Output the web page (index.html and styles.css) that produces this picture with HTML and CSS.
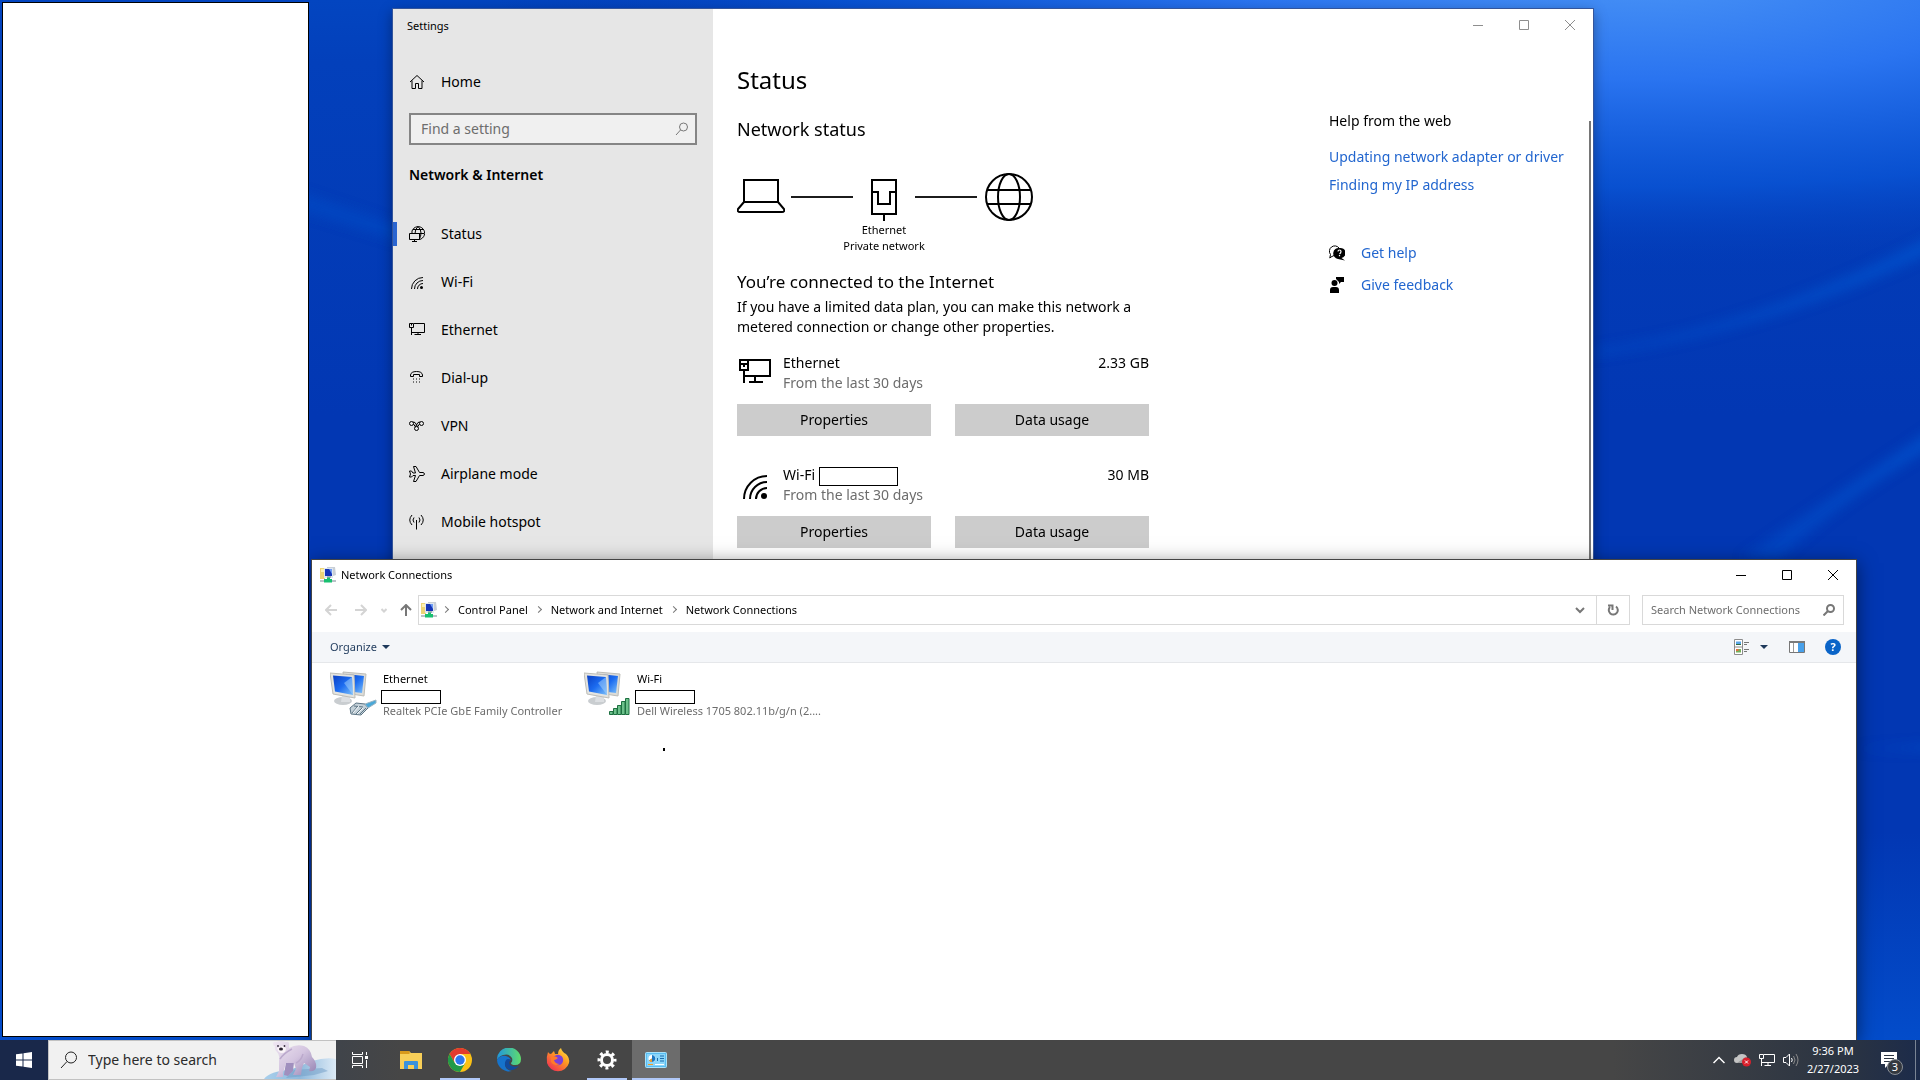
FILE: index.html
```html
<!DOCTYPE html>
<html lang="en">
<head>
  <meta charset="UTF-8">
  <meta name="viewport" content="width=device-width, initial-scale=1.0">
  <title>Desktop</title>
  <link rel="stylesheet" href="styles.css">
</head>
<body>
  <div class="desktop">
    <svg class="wallpaper" viewBox="0 0 1920 1080" preserveAspectRatio="none" aria-hidden="true">
      <defs>
        <linearGradient id="base" x1="0" y1="0" x2="0" y2="1">
          <stop offset="0" stop-color="#0345c0"/>
          <stop offset=".06" stop-color="#0340bb"/>
          <stop offset=".4" stop-color="#0237b3"/>
          <stop offset=".8" stop-color="#0237b3"/>
          <stop offset="1" stop-color="#034cca"/>
        </linearGradient>
        <radialGradient id="glow" gradientUnits="userSpaceOnUse" cx="0" cy="0" r="1" gradientTransform="translate(1640 -30) scale(1150 320)">
          <stop offset="0" stop-color="#4a94f6"/>
          <stop offset=".35" stop-color="#2a74f0"/>
          <stop offset=".7" stop-color="#0a55d6" stop-opacity=".8"/>
          <stop offset="1" stop-color="#0237b3" stop-opacity="0"/>
        </radialGradient>
        <linearGradient id="ray" x1="0" y1="0" x2="1" y2="0">
          <stop offset="0" stop-color="#0a5ad6" stop-opacity=".3"/>
          <stop offset="1" stop-color="#0a5ad6" stop-opacity=".6"/>
        </linearGradient>
        <filter id="soft"><feGaussianBlur stdDeviation="6"/></filter>
      </defs>
      <rect width="1920" height="1080" fill="url(#base)"/>
      <rect width="1920" height="1080" fill="url(#glow)"/>
      <g filter="url(#soft)">
        <path d="M1594 362Q1760 340 1940 240V258Q1770 345 1594 370Z" fill="url(#ray)"/>
        <path d="M1740 580Q1840 510 1940 440V460Q1840 520 1780 580Z" fill="url(#ray)"/>
        <path d="M1850 778L1940 773V779Z" fill="url(#ray)"/>
        <path d="M300 200L400 235V250L300 218Z" fill="#0a4cc6" opacity=".6"/>
      </g>
    </svg>

    <div class="blank-panel"></div>

    <!-- Settings window -->
    <section class="window settings">
      <nav class="sidebar">
        <div class="settings-title">Settings</div>
        <a class="nav-item home" href="#">
          <svg width="16" height="16" viewBox="0 0 16 16"><path d="M1 8 8 1.500 15 8M3 6.500V14.500H6.500V9.500H9.500V14.500H13V6.500"/></svg>
          Home
        </a>
        <div class="find">
          <input type="text" id="find" aria-label="Find a setting" placeholder="Find a setting">
          <svg width="14" height="14" viewBox="0 0 14 14"><circle cx="8.500" cy="5" r="4"/><path d="M5.500 8 1 13"/></svg>
        </div>
        <h2 class="nav-heading">Network &amp; Internet</h2>
        <a class="nav-item current" href="#">
          <svg width="16" height="16" viewBox="0 0 16 16"><path d="M3 7.500V5A6.500 6.500 0 1 1 10.500 13.500M4 3.500H14M9 .500Q6 3 6 7.500M9 .500Q12 3 12 7Q12 11 10 13.500M6 7.500H15M.500 7.500H10.500V13.500H.500ZM5.500 13.500V15.500M3 15.500H8"/></svg>
          Status
        </a>
        <a class="nav-item" href="#">
          <svg width="16" height="16" viewBox="0 0 16 16"><path d="M2.500 15A11.500 11.500 0 0 1 14 3.500M5.500 15A8.500 8.500 0 0 1 14 6.500M8.500 15A5.500 5.500 0 0 1 14 9.500"/><circle cx="12.500" cy="13.500" r="1.500" class="solid"/></svg>
          Wi-Fi
        </a>
        <a class="nav-item" href="#">
          <svg width="16" height="16" viewBox="0 0 16 16"><path d="M5 1.500H15.500V10.500H3M.500 1.500H4.500V5.500H.500ZM2.500 5.500V13M9 10.500V12.500M5.500 12.500H12M2.500 1.500V3.500"/></svg>
          Ethernet
        </a>
        <a class="nav-item" href="#">
          <svg width="16" height="16" viewBox="0 0 16 16"><path d="M1.500 6.500V5Q2 1.500 7.500 1.500T13.500 5V6.500H10.500V4.500H4.500V6.500Z"/><path d="M4 9h1m2 0h1m2 0h1M4 12h1m2 0h1m2 0h1"/></svg>
          Dial-up
        </a>
        <a class="nav-item" href="#">
          <svg width="16" height="16" viewBox="0 0 16 16"><circle cx="2.500" cy="5.500" r="2"/><circle cx="12.500" cy="5.500" r="2"/><circle cx="7.500" cy="10.500" r="2"/><path d="M4 4 6 4.500 8.500 8.500M11 4 9 4.500 6.500 8.500M4.500 6 6.500 9M10.500 6 8.500 9"/></svg>
          VPN
        </a>
        <a class="nav-item" href="#">
          <svg width="16" height="16" viewBox="0 0 16 16"><path d="M.500 5H2.500L4 7H6.500L4.500 .500H7L10.500 6.500H14Q15.500 7 15.500 8T14 9.500H10.500L7 15.500H4.500L6.500 9.500H4L2.500 11H.500L1.500 8Z"/></svg>
          Airplane mode
        </a>
        <a class="nav-item" href="#">
          <svg width="16" height="16" viewBox="0 0 16 16"><path d="M7.500 6V15.500M3 1Q-1.500 6 3 11M12 1Q16.500 6 12 11M5 3.500Q3 6 5 8.500M10 3.500Q12 6 10 8.500"/></svg>
          Mobile hotspot
        </a>
      </nav>

      <div class="settings-body">
        <div class="window-controls inactive">
          <button type="button" aria-label="Minimize"><svg width="10" height="10" viewBox="0 0 10 10"><path d="M0 5.500H10"/></svg></button>
          <button type="button" aria-label="Maximize"><svg width="10" height="10" viewBox="0 0 10 10"><path d="M.500 .500H9.500V9.500H.500Z"/></svg></button>
          <button type="button" aria-label="Close"><svg width="10" height="10" viewBox="0 0 10 10"><path d="M0 0 10 10M10 0 0 10"/></svg></button>
        </div>
        <div class="columns">
          <main class="status">
            <h1>Status</h1>
            <h2>Network status</h2>
            <div class="diagram">
              <svg width="48" height="48" viewBox="0 0 48 48"><path d="M7 7H41V29H7ZM7 29 1 36Q0 39 3 39H45Q48 39 47 36L41 29"/></svg>
              <span class="link-line"></span>
              <svg class="port" width="26" height="48" viewBox="0 0 26 48"><path d="M1 7H25V41H1ZM1 19H7V31H19V19H25M13 41V48"/></svg>
              <span class="link-line"></span>
              <svg width="48" height="48" viewBox="0 0 48 48"><circle cx="24" cy="24" r="23"/><ellipse cx="24" cy="24" rx="11" ry="23"/><path d="M2 17H46M2 31H46"/></svg>
              <p class="diagram-label">Ethernet<br>Private network</p>
            </div>
            <h3>You’re connected to the Internet</h3>
            <p class="plan">If you have a limited data plan, you can make this network a metered connection or change other properties.</p>

            <div class="adapter">
              <svg width="36" height="36" viewBox="0 0 36 36"><path d="M11 7H33V23H8M3 7H11V17H3ZM7 17V30M18 23V29M12 29H26M3 11H11M7 11V14"/></svg>
              <div class="adapter-text">
                <div>Ethernet</div>
                <div class="muted">From the last 30 days</div>
              </div>
              <div>2.33 GB</div>
            </div>
            <div class="adapter-buttons">
              <button type="button">Properties</button>
              <button type="button">Data usage</button>
            </div>

            <div class="adapter">
              <svg class="wifi" width="36" height="36" viewBox="0 0 36 36"><path d="M7 34A23 23 0 0 1 30 11M13 34A17 17 0 0 1 30 17M19 34A11 11 0 0 1 30 23"/><circle cx="27" cy="31" r="3" class="solid"/></svg>
              <div class="adapter-text">
                <div class="ssid">Wi-Fi <span class="blank-box"></span></div>
                <div class="muted">From the last 30 days</div>
              </div>
              <div>30 MB</div>
            </div>
            <div class="adapter-buttons">
              <button type="button">Properties</button>
              <button type="button">Data usage</button>
            </div>
          </main>

          <aside class="help">
            <p>Help from the web</p>
            <a href="#">Updating network adapter or driver</a>
            <a href="#">Finding my IP address</a>
            <div class="support">
              <svg width="16" height="16" viewBox="0 0 16 16"><path d="M5 10.500 2 12 .800 13 1.500 9.500A5 5 0 1 1 10 3" fill="none" stroke="#000"/><path d="M10.500 3A5 5 0 1 1 12.500 13L16 15.500 9 14A5.500 5.500 0 0 1 10.500 3Z"/><path d="M9 6.500Q9 5 10.500 5T12 6.500 10.500 9M10.500 10V11.200" fill="none" stroke="#fff" stroke-width="1.200"/></svg>
              <a href="#">Get help</a>
            </div>
            <div class="support">
              <svg width="16" height="16" viewBox="0 0 16 16"><circle cx="5.500" cy="6" r="3"/><path d="M1 16V13Q1 10 4 10H7Q10 10 10 13V16ZM7 0H15V5H12L10 7V5L7 2Z"/></svg>
              <a href="#">Give feedback</a>
            </div>
          </aside>
        </div>
        <div class="scroll-thumb"></div>
      </div>
    </section>

    <!-- Network Connections window -->
    <section class="window connections">
      <header class="titlebar">
        <svg width="16" height="16" viewBox="0 0 16 16"><use href="#net-icon"/></svg>
        <span class="titlebar-text">Network Connections</span>
        <div class="window-controls">
          <button type="button" aria-label="Minimize"><svg width="10" height="10" viewBox="0 0 10 10"><path d="M0 5.500H10"/></svg></button>
          <button type="button" aria-label="Maximize"><svg width="10" height="10" viewBox="0 0 10 10"><path d="M.500 .500H9.500V9.500H.500Z"/></svg></button>
          <button type="button" aria-label="Close"><svg width="10" height="10" viewBox="0 0 10 10"><path d="M0 0 10 10M10 0 0 10"/></svg></button>
        </div>
      </header>
      <div class="address-row">
        <div class="history">
          <button type="button" aria-label="Back" disabled><svg width="12" height="12" viewBox="0 0 12 12"><path d="M12 6H1M6 1 1 6 6 11"/></svg></button>
          <button type="button" aria-label="Forward" disabled><svg width="12" height="12" viewBox="0 0 12 12"><path d="M0 6H11M6 1 11 6 6 11"/></svg></button>
          <button type="button" class="recent" aria-label="Recent locations" disabled><svg width="6" height="12" viewBox="0 0 6 12"><path d="M.500 5 3 7.500 5.500 5"/></svg></button>
          <button type="button" class="up" aria-label="Up"><svg width="12" height="12" viewBox="0 0 12 12"><path d="M6 12V1M1 6 6 1 11 6"/></svg></button>
        </div>
        <div class="address">
          <svg width="16" height="16" viewBox="0 0 16 16"><use href="#net-icon"/></svg>
          <span class="crumb-sep"></span>
          <a href="#">Control Panel</a>
          <span class="crumb-sep"></span>
          <a href="#">Network and Internet</a>
          <span class="crumb-sep"></span>
          <a href="#">Network Connections</a>
          <button type="button" class="address-drop" aria-label="Previous locations"><svg width="10" height="10" viewBox="0 0 10 10"><path d="M1 3 5 7 9 3"/></svg></button>
          <button type="button" class="refresh" aria-label="Refresh"><svg width="12" height="12" viewBox="0 0 12 12"><path d="M9 2.500A4.500 4.500 0 1 1 3 3M1 1.500H5.500V6"/></svg></button>
        </div>
        <div class="conn-search">
          <input type="text" aria-label="Search Network Connections" placeholder="Search Network Connections">
          <svg width="12" height="12" viewBox="0 0 12 12"><circle cx="7.500" cy="4.500" r="3.500"/><path d="M5 7 .500 11.500"/></svg>
        </div>
      </div>
      <div class="toolbar">
        <button type="button" class="organize">Organize <span class="caret"></span></button>
        <button type="button" class="view" aria-label="Change your view">
          <svg width="16" height="16" viewBox="0 0 16 16"><path d="M.500 .500H8.500V15.500H.500ZM.500 8H8.500" fill="#fff" stroke="#8c8c8c"/><path d="M2 2.500H7V6H2Z" fill="#5aa6e8"/><path d="M2 5H7V6H2Z" fill="#2d6a3e"/><path d="M2 10H7V13.500H2Z" fill="#73b05a"/><path d="M2 10H4.500V12H2Z" fill="#e07040"/><path d="M10 3.500H15M10 5.500H13M10 10.500H15M10 12.500H13" stroke="#777"/></svg>
          <span class="caret"></span>
        </button>
        <button type="button" aria-label="Show the preview pane"><svg width="16" height="12" viewBox="0 0 16 12"><path d="M.500 .500H15.500V11.500H.500Z" fill="#fff" stroke="#777"/><path d="M0 0H16V2H0Z" fill="#7a7a7a"/><path d="M4.500 2V11" stroke="#999"/><path d="M9 2H15V11H9Z" fill="#48a0ea"/></svg></button>
        <button type="button" class="help-button" aria-label="Get help">?</button>
      </div>
      <div class="files">
        <div class="file">
          <svg class="file-icon" width="48" height="46" viewBox="0 0 48 46">
            <use href="#monitors"/>
            <path d="M20 37 26 32 35 33 38 37 31 44 21 43Z" fill="#c3d0d8" stroke="#5c7484"/><path d="M22 42 28 35M26 43 32 37M30 43 36 37M24 35 33 36" fill="none" stroke="#5c7484"/><path d="M23 42 29 35M27 43 33 37" stroke="#f4f8fa"/><path d="M35 33 46 29V32L38 37Z" fill="#4aa8d8" stroke="#9ab4c2"/>
          </svg>
          <div class="file-text">
            <div>Ethernet</div>
            <div class="blank-box"></div>
            <div class="muted">Realtek PCIe GbE Family Controller</div>
          </div>
        </div>
        <div class="file">
          <svg class="file-icon" width="48" height="46" viewBox="0 0 48 46">
            <use href="#monitors"/>
            <path d="M25.500 40.500H29V43.500H25.500ZM29.500 37.500H33V43.500H29.500ZM33.500 34.500H37V43.500H33.500ZM37.500 30.500H41V43.500H37.500ZM41.500 27.500H45V43.500H41.500Z" fill="#6cc08a" stroke="#1d7040"/>
          </svg>
          <div class="file-text">
            <div>Wi-Fi</div>
            <div class="blank-box"></div>
            <div class="muted">Dell Wireless 1705 802.11b/g/n (2....</div>
          </div>
        </div>
      </div>
      <div class="speck"></div>
    </section>
  </div>

  <footer class="taskbar">
    <button type="button" class="start" aria-label="Start"><svg width="16" height="16" viewBox="0 0 16 16"><path d="M0 2.300 6.500 1.400V7.500H0ZM7.500 1.200 16 0V7.500H7.500ZM0 8.500H6.500V14.600L0 13.700ZM7.500 8.500H16V16L7.500 14.800Z" fill="#fff"/></svg></button>
    <div class="task-search">
      <svg width="18" height="18" viewBox="0 0 18 18"><circle cx="11" cy="6.500" r="5.500"/><path d="M7 10.500 1 17"/></svg>
      <input type="text" aria-label="Type here to search" placeholder="Type here to search">
      <svg class="bear" width="72" height="38" viewBox="0 0 72 38" aria-hidden="true">
        <defs>
          <linearGradient id="fur" x1="0" y1="0" x2="1" y2="1"><stop offset="0" stop-color="#f0e8f2"/><stop offset=".5" stop-color="#d4c5e0"/><stop offset="1" stop-color="#8e7cae"/></linearGradient>
          <linearGradient id="ice" x1="0" y1="0" x2="1" y2="0"><stop offset="0" stop-color="#a8cfec"/><stop offset=".5" stop-color="#8fb9dc"/><stop offset="1" stop-color="#dceaf6"/></linearGradient>
        </defs>
        <path d="M0 38Q6 30 26 29L48 20Q62 16 72 18V38Z" fill="url(#ice)"/>
        <path d="M22 37 30 29 58 27 64 30 50 34Z" fill="#6f9cc6" opacity=".5"/>
        <path d="M22 21 30 21 29 30 24 35 20 34Z" fill="#a08fbe"/>
        <path d="M9 3Q9 0 12 1Q17 -1 22 1Q25 0 25 3L25 7Q32 3 40 5Q47 8 48 16Q53 21 52 27 50 31 45 30L46 26 40 22 38 27 37 34H29L32 28 30 22 22 22 19 32 19 36H12L15 30 15 18Q16 14 13 11Q10 8 11 5Q9 5 9 3Z" fill="url(#fur)"/>
        <path d="M16 18Q20 12 28 8M32 22Q37 20 39 13" fill="none" stroke="#bba9cc" stroke-width="1.500"/>
        <path d="M13 7Q14 12 18 12T22 7L18 5Z" fill="#faf4f8"/>
        <circle cx="14" cy="5" r=".9" fill="#3a3040"/><circle cx="20.500" cy="5" r=".9" fill="#3a3040"/><ellipse cx="17" cy="8" rx="2" ry="1.500" fill="#2e2634"/>
      </svg>
    </div>
    <div class="apps">
      <button type="button" class="task-view" aria-label="Task View"><svg width="16" height="16" viewBox="0 0 16 16"><path d="M.500 0V2.500H10.500V0M.500 4.500H10.500V11.500H.500ZM.500 16V13.500H10.500V16M14.500 0V3M14.500 8V16" fill="none" stroke="#fff"/><path d="M13 4H16V7H13Z" fill="#fff"/></svg></button>
      <button type="button" aria-label="File Explorer"><svg width="22" height="20" viewBox="0 0 22 20"><path d="M0 1H9L11 3H22V19H0Z" fill="#f8cf58"/><path d="M0 1H9L10 3 9 4H0Z" fill="#d99a1b"/><path d="M4 19V12Q4 11 5 11H17Q18 11 18 12V19H14V15H8V19Z" fill="#3b92dc"/></svg></button>
      <button type="button" class="running" aria-label="Google Chrome"><svg width="24" height="24" viewBox="0 0 24 24"><circle cx="12" cy="12" r="12" fill="#fbc116"/><path d="M1.600 6A12 12 0 0 1 22.400 6L12 6 6.800 15Z" fill="#e33b2e"/><path d="M1.600 6A12 12 0 0 0 12 24L17.200 15 6.800 15Z" fill="#229a48"/><circle cx="12" cy="12" r="6" fill="#fff"/><circle cx="12" cy="12" r="4.700" fill="#2e77ee"/></svg></button>
      <button type="button" aria-label="Microsoft Edge"><svg width="24" height="24" viewBox="0 0 24 24"><defs><linearGradient id="edge" x1="0" y1="0" x2="1" y2="0"><stop offset="0" stop-color="#2097dd"/><stop offset="1" stop-color="#5fdc6c"/></linearGradient></defs><path d="M0 12A12 12 0 0 1 24 11Q24 17 18 17 14 17 14 15 16 13 15 10 12 5 6 7 1 9 0 12Z" fill="url(#edge)"/><path d="M0 12Q3 7 9 8 13 9 14 12 9 11 8 16 8 22 15 23A12 12 0 0 1 0 12Z" fill="#1673cb"/><path d="M9 12Q6 18 11 21 16 24 22 18 17 20 13 17 11 14 14 12 11 10 9 12Z" fill="#114a9c"/></svg></button>
      <button type="button" aria-label="Firefox"><svg width="24" height="24" viewBox="0 0 24 24"><defs><linearGradient id="fox" x1="1" y1="0" x2=".2" y2="1"><stop offset="0" stop-color="#fff04a"/><stop offset=".45" stop-color="#ff9a22"/><stop offset="1" stop-color="#f02c55"/></linearGradient></defs><path d="M2 4Q3 6 5 6L8 3 9 6 12 6Q12 2 15 0 16 4 20 6 24 10 23 15A11.500 11.500 0 0 1 1 15Q0 9 2 4Z" fill="url(#fox)"/><circle cx="12" cy="12" r="5.200" fill="#7a40d8"/><path d="M5 9Q9 7 12 10 10 12 8 12 9 16 14 16 8 19 5 14Z" fill="#ff7a2a"/></svg></button>
      <button type="button" class="running" aria-label="Settings"><svg width="20" height="20" viewBox="0 0 20 20"><circle cx="10" cy="10" r="5.500" fill="none" stroke="#fff" stroke-width="3"/><circle cx="10" cy="10" r="8" fill="none" stroke="#fff" stroke-width="3" stroke-dasharray="3 3.283" stroke-dashoffset="1.500"/></svg></button>
      <button type="button" class="running active" aria-label="Control Panel"><svg width="22" height="16" viewBox="0 0 22 16"><rect x=".5" y=".5" width="21" height="15" rx="1" fill="#59bdf2" stroke="#a8e2fb"/><path d="M2 2H20V14H2Z" fill="#8bd6fa"/><circle cx="7" cy="6.500" r="3.500" fill="#fff"/><path d="M7 6.500V3A3.500 3.500 0 1 1 4 8.500Z" fill="#1b78c4"/><path d="M7 6.500 4 8.500A3.500 3.500 0 0 0 7 10Z" fill="#f29b28"/><path d="M15 4H19M15 6.500H19M15 9H19M12.500 6V9" stroke="#1b6cae"/><path d="M3 12.500H8" stroke="#f29b28"/><path d="M10 12.500H19" stroke="#fff"/></svg></button>
    </div>
    <div class="tray">
      <button type="button" aria-label="Show hidden icons"><svg width="12" height="8" viewBox="0 0 12 8"><path d="M.500 7 6 1.500 11.500 7" stroke-width="1.500"/></svg></button>
      <button type="button" aria-label="OneDrive"><svg width="18" height="14" viewBox="0 0 18 14"><path d="M3 10Q0 10 0 7T3 4Q4 1 8 1T13 4V10Z" fill="#c4c4c4" stroke="none"/><path d="M3 10 13 3V10Z" fill="#9a9a9a" stroke="none"/><circle cx="12.500" cy="9" r="4.500" fill="#d9202c" stroke="none"/><path d="M11 7.500 14 10.500M14 7.500 11 10.500"/></svg></button>
      <button type="button" aria-label="Network"><svg width="16" height="14" viewBox="0 0 16 14"><path d="M5 1.500H15.500V9.500H3M.500 1.500H4.500V5.500H.500ZM2.500 5.500V13M9 9.500V12.500M5.500 12.500H12"/></svg></button>
      <button type="button" aria-label="Speakers"><svg width="16" height="14" viewBox="0 0 16 14"><path d="M.500 4.500H3L6.500 1V13L3 9.500H.500ZM8.500 5Q10 7 8.500 9"/><path d="M10.500 3Q13.500 7 10.500 11M13 1Q17 7 13 13" stroke="#8a8a8a"/></svg></button>
      <time class="clock">9:36 PM<br>2/27/2023</time>
      <button type="button" class="notifications" aria-label="Notifications"><svg width="16" height="16" viewBox="0 0 16 16"><path d="M0 0H16V12H8L4 16V12H0Z" fill="#fff" stroke="none"/><path d="M3 3.500H13M3 6.500H13M3 9.500H10" stroke="#2c3543"/></svg><span class="badge">3</span></button>
      <button type="button" class="show-desktop" aria-label="Show desktop"></button>
    </div>
  </footer>

  <!-- shared icons -->
  <svg class="sprites" aria-hidden="true">
    <defs>
      <linearGradient id="screen" x1="0" y1="0" x2="1" y2="1"><stop offset="0" stop-color="#0a3fc4"/><stop offset=".5" stop-color="#1c6cf0"/><stop offset="1" stop-color="#7cc0fa"/></linearGradient>
      <symbol id="net-icon" viewBox="0 0 16 16"><path d="M0 1H5V12H0Z" fill="#ecd476"/><path d="M1 2H4V5H1Z" fill="#fbf0b4"/><path d="M7 0H15L16 8 13 9H7Z" fill="#c9cfd6"/><path d="M4 1H13V11H4Z" fill="#dfe6ee"/><path d="M5 2H12V9H5Z" fill="#1535b8"/><path d="M9 2H12V7Z" fill="#6f9cf4"/><path d="M7 9H11V11H7Z" fill="#aab2ba"/><path d="M0 13H16V15H0Z" fill="#b9c2c8"/><path d="M7 10.500H10V12H12V15.500H4V12H7Z" fill="#18c070"/></symbol>
      <symbol id="monitors" viewBox="0 0 48 46"><ellipse cx="13" cy="30" rx="9" ry="4" fill="#c9cdd0"/><path d="M12 24 20 26V31H11Z" fill="#dcdfe2"/><path d="M13 1 36 3 34 25 15 22Z" fill="#dcdcd8" stroke="#bdbdb8"/><path d="M16 3 34 5 32 22 16 20Z" fill="url(#screen)"/><path d="M0 2 24 4 25 27 3 23Z" fill="#e4e4e0" stroke="#bdbdb8"/><path d="M3 4.500 22 6 23 24 5 20.500Z" fill="url(#screen)"/><path d="M22 6 23 24 14 12Z" fill="#a8d4fc" opacity=".5"/></symbol>
    </defs>
  </svg>
</body>
</html>
```
FILE: styles.css
```css
*{
  box-sizing: border-box;
}
body{
  margin: 0;
  height: 100vh;
  display: flex;
  flex-direction: column;
  overflow: hidden;
  font: 14px/20px "Noto Sans", "Open Sans", sans-serif;
  color: #000;
}
h1, h2, h3, p{
  margin: 0;
  font-weight: 400;
}
a{
  color: inherit;
  text-decoration: none;
}
button, input{
  font: inherit;
  color: inherit;
  padding: 0;
  border: 0;
  background: none;
  border-radius: 0;
}
button{
  display: flex;
  align-items: center;
  justify-content: center;
}
input{
  outline: none;
  min-width: 0;
}
input::placeholder{
  color: #6d6d6d;
  opacity: 1;
}
svg{
  display: block;
  flex: none;
}
.sprites{
  position: absolute;
  width: 0;
  height: 0;
}
.muted{
  color: #6d6d6d;
}
.solid{
  fill: #000;
  stroke: none;
}

/* desktop */
.desktop{
  position: relative;
  flex: 1;
  min-height: 0;
  overflow: hidden;
  background: #0237b3;
}
.wallpaper{
  width: 100%;
  height: 100%;
}
.blank-panel{
  position: absolute;
  z-index: 1;
  top: 2px;
  left: 2px;
  bottom: 3px;
  width: 307px;
  background: #fff;
  border: 1px solid #000;
}
.blank-box{
  background: #fff;
  border: 1px solid #000;
}
.window{
  position: absolute;
  background: #fff;
}
.window-controls{
  display: flex;
  justify-content: flex-end;
}
.window-controls button{
  width: 46px;
  height: 32px;
}
.window-controls svg{
  fill: none;
  stroke: #000;
}
.window-controls.inactive svg{
  stroke: #8e8e8e;
}

/* settings */
.settings{
  top: 8px;
  left: 392px;
  right: 326px;
  bottom: 200px;
  display: flex;
  border: 1px solid #34559b;
  box-shadow: 0 4px 12px rgba(0, 0, 0, .35);
}
.sidebar{
  width: 320px;
  background: #e6e6e6;
}
.settings-title{
  padding-left: 14px;
  height: 32px;
  line-height: 34px;
  font-size: 11px;
}
.nav-item{
  position: relative;
  display: flex;
  align-items: center;
  gap: 16px;
  height: 48px;
  padding-left: 16px;
}
.nav-item svg, .find svg{
  fill: none;
  stroke: #000;
}
.home{
  margin-top: 17px;
}
.current::before{
  content: "";
  position: absolute;
  left: 0;
  top: 12px;
  width: 4px;
  height: 24px;
  background: #2a65d0;
}
.find{
  display: flex;
  align-items: center;
  height: 32px;
  margin: 7px 16px 0;
  padding: 0 6px 0 10px;
  border: 2px solid #858585;
  background: #f0f0f0;
}
.find input{
  flex: 1;
}
.find svg{
  stroke: #777;
}
.nav-heading{
  margin: 20px 16px 25px;
  font-size: 14px;
  font-weight: 600;
}
.settings-body{
  position: relative;
  flex: 1;
}
.scroll-thumb{
  position: absolute;
  top: 112px;
  right: 2px;
  bottom: 0;
  width: 2px;
  background: #767676;
}
.columns{
  display: flex;
  justify-content: space-between;
  padding: 19px 22px 0 24px;
}
.status{
  width: 412px;
}
.status h1{
  font-size: 24px;
  line-height: 40px;
}
.status h2{
  margin-top: 17px;
  font-size: 18px;
  line-height: 24px;
}
.diagram{
  display: grid;
  grid-template-columns: 54px 62px 62px 70px 48px;
  align-items: center;
  margin: 32px 0 16px;
}
.diagram svg{
  fill: none;
  stroke: #000;
  stroke-width: 2;
}
.port{
  justify-self: center;
}
.link-line{
  width: 62px;
  height: 2px;
  background: #1c1c1c;
}
.diagram-label{
  grid-column: 2 / 5;
  width: 186px;
  padding-top: 1px;
  font-size: 11px;
  line-height: 16px;
  text-align: center;
}
.status h3{
  font-size: 17px;
  line-height: 24px;
}
.plan{
  margin-top: 3px;
}
.adapter{
  display: flex;
  margin-top: 16px;
}
.adapter svg{
  fill: none;
  stroke: #000;
  stroke-width: 2;
}
.adapter-text{
  flex: 1;
  padding-left: 10px;
}
.ssid{
  display: flex;
  gap: 4px;
  height: 20px;
}
.ssid .blank-box{
  width: 79px;
  height: 19px;
  margin-top: 2px;
}
.adapter-buttons{
  display: grid;
  grid-template-columns: 1fr 1fr;
  gap: 24px;
  margin-top: 11px;
  margin-bottom: 29px;
}
.adapter-buttons button{
  height: 32px;
  background: #ccc;
}
.help{
  width: 242px;
  padding-top: 51px;
}
.help > a{
  display: block;
  margin-top: 8px;
  color: #2266cf;
}
.help p{
  margin-bottom: 16px;
}
.support{
  display: flex;
  align-items: center;
  gap: 16px;
  margin-top: 12px;
  color: #2266cf;
}
.help > a + .support{
  margin-top: 48px;
}

/* network connections */
.connections{
  top: 559px;
  left: 311px;
  right: 63px;
  bottom: 0;
  border: 1px solid #444;
  border-width: 1px 1px 0;
  font-size: 11px;
  box-shadow: 0 4px 18px rgba(0, 0, 0, .5);
}
.titlebar{
  display: flex;
  align-items: center;
  height: 29px;
  padding-left: 8px;
}
.titlebar-text{
  flex: 1;
  margin-left: 5px;
}
.titlebar .window-controls button{
  height: 29px;
}
.address-row{
  display: flex;
  align-items: center;
  height: 41px;
  margin-bottom: 2px;
  padding: 0 12px 0 13px;
}
.history{
  display: flex;
  gap: 18px;
  margin-right: 6px;
}
.history svg{
  fill: none;
  stroke: #777;
  stroke-width: 2;
}
.history :disabled svg{
  stroke: #d4d4d4;
}
.history .recent{
  margin: 0 -4px;
}
.history .up{
  margin-left: -1px;
}
.address{
  flex: 1;
  display: flex;
  align-items: center;
  height: 30px;
  padding-left: 2px;
  border: 1px solid #d9d9d9;
}
.crumb-sep{
  width: 5px;
  height: 5px;
  margin: 0 10px 0 6px;
  border: solid #777;
  border-width: 1px 1px 0 0;
  transform: rotate(45deg);
}
.address a + .crumb-sep{
  margin-left: 8px;
}
.address button svg, .conn-search svg{
  fill: none;
  stroke: #777;
  stroke-width: 2;
}
.address-drop{
  width: 32px;
  height: 28px;
  margin-left: auto;
}
.refresh{
  width: 33px;
  height: 28px;
  border-left: 1px solid #d9d9d9;
}
.conn-search{
  display: flex;
  align-items: center;
  width: 202px;
  height: 30px;
  margin-left: 12px;
  padding: 0 8px;
  border: 1px solid #d9d9d9;
}
.conn-search input{
  flex: 1;
}
.toolbar{
  display: flex;
  align-items: center;
  height: 31px;
  padding: 0 15px 0 18px;
  background: #f4f6f9;
  border-bottom: 1px solid #e5e7ea;
  color: #1e395b;
}
.organize{
  margin-right: auto;
  gap: 5px;
}
.caret{
  border: 4px solid transparent;
  border-top-color: #1e395b;
  border-bottom: 0;
}
.view{
  gap: 10px;
  margin-right: 21px;
}
.help-button{
  width: 16px;
  height: 16px;
  margin-left: 20px;
  border-radius: 50%;
  background: #0a64c8;
  color: #fff;
  font-weight: 700;
}
.files{
  display: flex;
  padding: 8px 18px;
}
.file{
  display: flex;
  width: 254px;
}
.file-text{
  margin-left: 5px;
  line-height: 16px;
  white-space: nowrap;
}
.file-text .blank-box{
  width: 60px;
  height: 14px;
  margin: 3px 0 -1px -2px;
}
.speck{
  position: absolute;
  left: 351px;
  top: 188px;
  width: 2px;
  height: 3px;
  background: #000;
}

/* taskbar */
.taskbar{
  display: flex;
  height: 40px;
  background: linear-gradient(90deg, #40444a 340px, #464646 400px, #464646 84%, #2b3442 96%, #1c2b4a);
  color: #fff;
}
.start{
  width: 48px;
  background: #19284a;
}
.task-search{
  display: flex;
  align-items: center;
  width: 288px;
  padding-left: 11px;
  border: 1px solid #c2c2c2;
  border-right: 0;
  background: #f1f1f1;
  color: #222;
}
.task-search svg{
  fill: none;
  stroke: #222;
}
.task-search .bear{
  stroke: none;
}
.task-search input{
  flex: 1;
  margin-left: 10px;
}
.task-search input::placeholder{
  color: #2b2b2b;
}
.apps{
  display: flex;
  gap: 1px;
}
.apps button{
  position: relative;
  width: 48px;
}
.apps .task-view{
  margin-right: 2px;
}
.apps .running::after{
  content: "";
  position: absolute;
  left: 4px;
  right: 4px;
  bottom: 0;
  height: 2px;
  background: #b0c8f8;
}
.apps .active{
  background: #6c6c6c;
}
.apps .active::after{
  left: 0;
  right: 0;
}
.tray{
  display: flex;
  align-items: center;
  margin-left: auto;
  height: 40px;
}
.tray button{
  width: 24px;
  height: 40px;
}
.tray svg{
  fill: none;
  stroke: #fff;
}
.clock{
  width: 60px;
  font-size: 11px;
  line-height: 18px;
  text-align: center;
}
.tray .notifications{
  position: relative;
  width: 52px;
}
.badge{
  position: absolute;
  right: 12px;
  bottom: 5px;
  width: 16px;
  height: 16px;
  border: 1px solid #8a8f96;
  border-radius: 50%;
  background: #33383f;
  font-size: 11px;
  line-height: 14px;
  text-align: center;
}
.tray .show-desktop{
  width: 5px;
  border-left: 1px solid #7a8494;
}
```
